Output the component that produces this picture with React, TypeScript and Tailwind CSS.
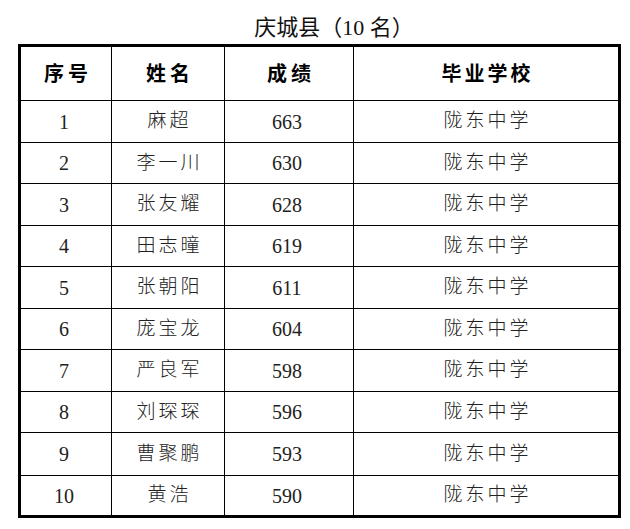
const rows = [
  { no: "1", name: "麻超", score: "663" },
  { no: "2", name: "李一川", score: "630" },
  { no: "3", name: "张友耀", score: "628" },
  { no: "4", name: "田志曈", score: "619" },
  { no: "5", name: "张朝阳", score: "611" },
  { no: "6", name: "庞宝龙", score: "604" },
  { no: "7", name: "严良军", score: "598" },
  { no: "8", name: "刘琛琛", score: "596" },
  { no: "9", name: "曹聚鹏", score: "593" },
  { no: "10", name: "黄浩", score: "590" },
];

const heights = [42, 41, 42, 41, 42, 41, 42, 41, 43, 41];

export default function App() {
  return (
    <div
      className="w-[630px] h-[529px] bg-white text-[#222]"
      style={{ fontFamily: '"Liberation Serif", "Noto Sans CJK SC", serif' }}
    >
      <div className="h-[44px] flex items-end justify-center pb-[5px] pl-[38px]">
        <h1 className="text-[22px] leading-[22px] text-[#111]">
          庆城县（10 名）
        </h1>
      </div>

      <table className="ml-[18px] w-[600px] table-fixed border-collapse border-[3px] border-black text-[20px]">
        <colgroup>
          <col className="w-[92px]" />
          <col className="w-[113px]" />
          <col className="w-[129px]" />
          <col className="w-[266px]" />
        </colgroup>
        <thead>
          <tr className="h-[55px]">
            <th className="border border-black font-bold text-black tracking-[4px] pl-[4px]">序号</th>
            <th className="border border-black font-bold text-black tracking-[4px] pl-[4px]">姓名</th>
            <th className="border border-black font-bold text-black tracking-[4px] pl-[4px]">成绩</th>
            <th className="border border-black font-bold text-black tracking-[3px] pl-[3px]">毕业学校</th>
          </tr>
        </thead>
        <tbody>
          {rows.map((r, i) => (
            <tr key={r.no} style={{ height: heights[i] }}>
              <td className="border border-black text-center pr-[4px]">{r.no}</td>
              <td className="border border-black text-center font-light tracking-[3px] pl-[3px] text-[19px]">{r.name}</td>
              <td className="border border-black text-center pr-[4px]">{r.score}</td>
              <td className="border border-black text-center font-light tracking-[3px] pl-[3px] text-[19px]">陇东中学</td>
            </tr>
          ))}
        </tbody>
      </table>
    </div>
  );
}
